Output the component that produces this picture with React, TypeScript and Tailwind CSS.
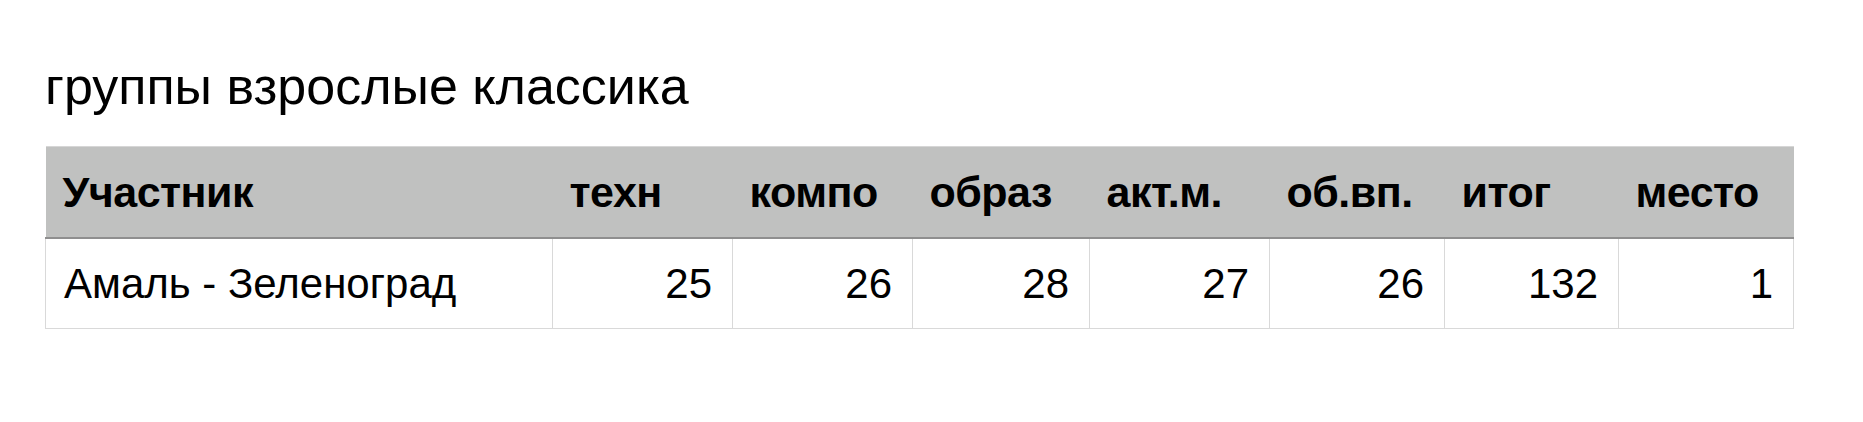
const columns = [
  { label: "Участник", width: "w-[507px]" },
  { label: "техн", width: "w-[180px]" },
  { label: "компо", width: "w-[180px]" },
  { label: "образ", width: "w-[177px]" },
  { label: "акт.м.", width: "w-[180px]" },
  { label: "об.вп.", width: "w-[175px]" },
  { label: "итог", width: "w-[174px]" },
  { label: "место", width: "w-[175px]" },
];

const rows = [["Амаль - Зеленоград", "25", "26", "28", "27", "26", "132", "1"]];

export default function App() {
  return (
    <div className="min-h-[422px] w-full bg-white pl-[45px] pt-[56px] font-['Liberation_Sans',Arial,sans-serif] text-black">
      <h1 className="text-[52px] leading-[60px] font-normal">группы взрослые классика</h1>
      <table className="mt-[30px] w-[1748px] table-fixed border-collapse">
        <colgroup>
          {columns.map((c) => (
            <col key={c.label} className={c.width} />
          ))}
        </colgroup>
        <thead>
          <tr className="h-[91px] bg-[#c0c1c0]">
            {columns.map((c) => (
              <th
                key={c.label}
                className="border-t border-t-[#d6d6d6] border-b-2 border-b-[#8f8f8f] pl-[17px] pr-0 text-left align-middle text-[43px] font-bold tracking-[-0.5px]"
              >
                {c.label}
              </th>
            ))}
          </tr>
        </thead>
        <tbody>
          {rows.map((row, i) => (
            <tr key={i} className="h-[91px]">
              {row.map((cell, j) => (
                <td
                  key={j}
                  className={
                    j === 0
                      ? "border border-[#d9d9d9] px-[18px] text-left align-middle text-[42px]"
                      : "border border-[#d9d9d9] px-[20px] text-right align-middle text-[42px]"
                  }
                >
                  {cell}
                </td>
              ))}
            </tr>
          ))}
        </tbody>
      </table>
    </div>
  );
}
